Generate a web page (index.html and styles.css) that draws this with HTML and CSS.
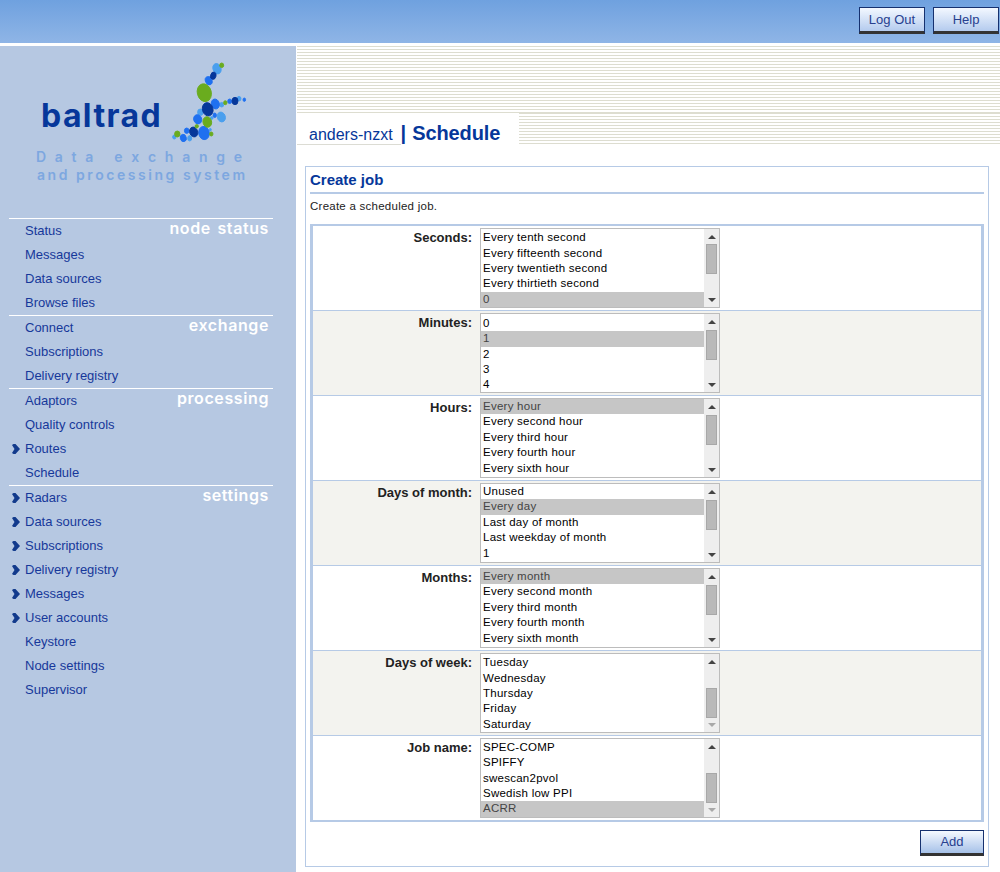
FILE: index.html
```html
<!DOCTYPE html>
<html lang="en">

<head>
  <meta charset="UTF-8" />
  <title>Schedule</title>
  <link rel="stylesheet" href="styles.css">
</head>

<body>

  <header class="topbar">
    <a class="btn">Log Out</a>
    <a class="btn">Help</a>
  </header>

  <div class="page">

    <aside class="sidebar">
      <div class="logo">
        <div class="logo-name">baltrad</div>
        <svg class="logo-mark" viewBox="0 0 100 95" width="100" height="95">
          <g fill="#4a9fee" stroke="#4a9fee" stroke-width="0.9">
            <ellipse cx="57" cy="13.700" rx="4" ry="5.300" transform="rotate(-20 57 13.700)" />
            <ellipse cx="61.700" cy="49.700" rx="2" ry="2.300" />
            <ellipse cx="79" cy="43.700" rx="2" ry="2.300" />
            <ellipse cx="40.300" cy="57.300" rx="2.700" ry="3.300" />
            <ellipse cx="61.300" cy="62" rx="4" ry="5" transform="rotate(-20 61.300 62)" />
            <ellipse cx="51.700" cy="63" rx="1.400" ry="1.400" />
            <ellipse cx="50.300" cy="74.700" rx="1" ry="1.300" />
            <ellipse cx="29.700" cy="83.300" rx="2" ry="2.700" />
            <ellipse cx="14.300" cy="82" rx="1.700" ry="2" />
          </g>
          <g fill="#1f70f0" stroke="#1f70f0" stroke-width="0.9">
            <ellipse cx="48.700" cy="25.700" rx="3.300" ry="4.300" transform="rotate(-20 48.700 25.700)" />
            <ellipse cx="55.300" cy="49" rx="4" ry="5" transform="rotate(-15 55.300 49)" />
            <ellipse cx="69.700" cy="46.300" rx="2" ry="2.300" />
            <ellipse cx="84.300" cy="44.700" rx="1.300" ry="1.700" />
            <ellipse cx="37.700" cy="64.300" rx="4" ry="4.700" transform="rotate(-20 37.700 64.300)" />
            <ellipse cx="54.700" cy="60.300" rx="1.700" ry="2.300" />
            <ellipse cx="44" cy="78" rx="5.300" ry="6.700" transform="rotate(-10 44 78)" />
            <ellipse cx="26.700" cy="75.700" rx="2.300" ry="2.700" />
            <ellipse cx="23.300" cy="83" rx="3" ry="3.700" transform="rotate(-15 23.300 83)" />
          </g>
          <g fill="#06379a" stroke="#06379a" stroke-width="0.9">
            <ellipse cx="53.300" cy="20.700" rx="2.700" ry="3.700" transform="rotate(15 53.300 20.700)" />
            <ellipse cx="47.700" cy="54.300" rx="5.300" ry="6.700" transform="rotate(-15 47.700 54.300)" />
            <ellipse cx="75" cy="46" rx="3" ry="3.700" />
            <ellipse cx="33.700" cy="77" rx="4" ry="5" transform="rotate(-20 33.700 77)" />
          </g>
          <g fill="#6aac1e" stroke="#6aac1e" stroke-width="0.9">
            <ellipse cx="61.700" cy="10.300" rx="2" ry="2.300" />
            <ellipse cx="44.300" cy="37.700" rx="7" ry="9" transform="rotate(-15 44.300 37.700)" />
            <ellipse cx="65.300" cy="47.700" rx="1.700" ry="2" />
            <ellipse cx="47.300" cy="67" rx="4.300" ry="5.300" transform="rotate(-15 47.300 67)" />
            <ellipse cx="36.700" cy="71.300" rx="1.700" ry="1.700" />
            <ellipse cx="51.300" cy="79" rx="1.700" ry="2" />
            <ellipse cx="17.300" cy="79" rx="2.700" ry="3" />
          </g>
        </svg>
        <div class="logo-tag">D a t a &nbsp; e x c h a n g e</div>
        <div class="logo-tag logo-tag-2">and processing system</div>
      </div>

      <nav class="menu">
        <div class="menu-group">
          <span class="menu-title">node status</span>
          <a class="menu-item">Status</a>
          <a class="menu-item">Messages</a>
          <a class="menu-item">Data sources</a>
          <a class="menu-item">Browse files</a>
        </div>
        <div class="menu-group">
          <span class="menu-title">exchange</span>
          <a class="menu-item">Connect</a>
          <a class="menu-item">Subscriptions</a>
          <a class="menu-item">Delivery registry</a>
        </div>
        <div class="menu-group">
          <span class="menu-title">processing</span>
          <a class="menu-item">Adaptors</a>
          <a class="menu-item">Quality controls</a>
          <a class="menu-item has-sub"><svg class="chev" viewBox="0 0 8 10"><path d="M0 1l1.500-1h2l4.500 5-4.500 5h-2l-1.500-1 2.500-4z" /></svg>Routes</a>
          <a class="menu-item">Schedule</a>
        </div>
        <div class="menu-group">
          <span class="menu-title">settings</span>
          <a class="menu-item has-sub"><svg class="chev" viewBox="0 0 8 10"><path d="M0 1l1.500-1h2l4.500 5-4.500 5h-2l-1.500-1 2.500-4z" /></svg>Radars</a>
          <a class="menu-item has-sub"><svg class="chev" viewBox="0 0 8 10"><path d="M0 1l1.500-1h2l4.500 5-4.500 5h-2l-1.500-1 2.500-4z" /></svg>Data sources</a>
          <a class="menu-item has-sub"><svg class="chev" viewBox="0 0 8 10"><path d="M0 1l1.500-1h2l4.500 5-4.500 5h-2l-1.500-1 2.500-4z" /></svg>Subscriptions</a>
          <a class="menu-item has-sub"><svg class="chev" viewBox="0 0 8 10"><path d="M0 1l1.500-1h2l4.500 5-4.500 5h-2l-1.500-1 2.500-4z" /></svg>Delivery registry</a>
          <a class="menu-item has-sub"><svg class="chev" viewBox="0 0 8 10"><path d="M0 1l1.500-1h2l4.500 5-4.500 5h-2l-1.500-1 2.500-4z" /></svg>Messages</a>
          <a class="menu-item has-sub"><svg class="chev" viewBox="0 0 8 10"><path d="M0 1l1.500-1h2l4.500 5-4.500 5h-2l-1.500-1 2.500-4z" /></svg>User accounts</a>
          <a class="menu-item">Keystore</a>
          <a class="menu-item">Node settings</a>
          <a class="menu-item">Supervisor</a>
        </div>
      </nav>
    </aside>

    <main class="content">
      <div class="stripes"></div>
      <div class="title-row">
        <div class="title">
          <span class="node-name">anders-nzxt</span>
          <span class="title-sep">|</span>
          <span class="page-name">Schedule</span>
        </div>
        <div class="stripes stripes-fill"></div>
      </div>

      <section class="panel">
        <h2 class="panel-title">Create job</h2>
        <p class="panel-text">Create a scheduled job.</p>

        <div class="job-table">

          <div class="job-row">
            <label class="job-label">Seconds:</label>
            <div class="listbox">
              <div class="options shift-1">
                <div>Every tenth second</div>
                <div>Every fifteenth second</div>
                <div>Every twentieth second</div>
                <div>Every thirtieth second</div>
                <div class="sel">0</div>
              </div>
              <div class="scroll"><i class="up"></i><b class="thumb thumb-mid"></b><i class="down"></i></div>
            </div>
          </div>

          <div class="job-row alt">
            <label class="job-label">Minutes:</label>
            <div class="listbox">
              <div class="options shift-2">
                <div>0</div>
                <div class="sel">1</div>
                <div>2</div>
                <div>3</div>
                <div>4</div>
              </div>
              <div class="scroll"><i class="up"></i><b class="thumb thumb-top"></b><i class="down"></i></div>
            </div>
          </div>

          <div class="job-row">
            <label class="job-label">Hours:</label>
            <div class="listbox">
              <div class="options">
                <div class="sel">Every hour</div>
                <div>Every second hour</div>
                <div>Every third hour</div>
                <div>Every fourth hour</div>
                <div>Every sixth hour</div>
              </div>
              <div class="scroll"><i class="up"></i><b class="thumb thumb-top"></b><i class="down"></i></div>
            </div>
          </div>

          <div class="job-row alt">
            <label class="job-label">Days of month:</label>
            <div class="listbox">
              <div class="options">
                <div>Unused</div>
                <div class="sel">Every day</div>
                <div>Last day of month</div>
                <div>Last weekday of month</div>
                <div>1</div>
              </div>
              <div class="scroll"><i class="up"></i><b class="thumb thumb-top"></b><i class="down"></i></div>
            </div>
          </div>

          <div class="job-row">
            <label class="job-label">Months:</label>
            <div class="listbox">
              <div class="options">
                <div class="sel">Every month</div>
                <div>Every second month</div>
                <div>Every third month</div>
                <div>Every fourth month</div>
                <div>Every sixth month</div>
              </div>
              <div class="scroll"><i class="up"></i><b class="thumb thumb-top"></b><i class="down"></i></div>
            </div>
          </div>

          <div class="job-row alt">
            <label class="job-label">Days of week:</label>
            <div class="listbox">
              <div class="options shift-1">
                <div>Tuesday</div>
                <div>Wednesday</div>
                <div>Thursday</div>
                <div>Friday</div>
                <div>Saturday</div>
              </div>
              <div class="scroll"><i class="up"></i><b class="thumb thumb-end"></b><i class="down off"></i></div>
            </div>
          </div>

          <div class="job-row last">
            <label class="job-label">Job name:</label>
            <div class="listbox">
              <div class="options shift-3">
                <div>SPEC-COMP</div>
                <div>SPIFFY</div>
                <div>swescan2pvol</div>
                <div>Swedish low PPI</div>
                <div class="sel">ACRR</div>
              </div>
              <div class="scroll"><i class="up"></i><b class="thumb thumb-end"></b><i class="down off"></i></div>
            </div>
          </div>

        </div>

        <div class="panel-foot">
          <a class="btn btn-add">Add</a>
        </div>
      </section>
    </main>

  </div>

</body>

</html>
```

FILE: styles.css
```css
html,
body {
  margin: 0;
  padding: 0;
}

body {
  width: 1000px;
  background: #fff;
  font-family: "Liberation Sans", Arial, sans-serif;
  font-size: 13px;
  color: #222;
}

.topbar {
  height: 43px;
  box-sizing: border-box;
  padding: 7px 1px 0 0;
  display: flex;
  justify-content: flex-end;
  align-items: flex-start;
  gap: 8px;
  background: linear-gradient(#6fa1df, #8fb5e6);
}

.btn {
  display: block;
  box-sizing: border-box;
  width: 66px;
  height: 27px;
  line-height: 24px;
  text-align: center;
  color: #27408f;
  border: 1px solid #16316f;
  border-bottom: 3px solid #333;
  background: linear-gradient(#f3f8ff, #b4cbee);
}

.page {
  display: flex;
  margin-top: 3px;
}

/* sidebar */

.sidebar {
  width: 296px;
  height: 826px;
  flex: none;
  background: #b6c8e2;
}

.logo {
  height: 172px;
  position: relative;
}

.logo-name {
  position: absolute;
  left: 41px;
  top: 46px;
  font-family: Inter, sans-serif;
  font-size: 32px;
  font-weight: 700;
  line-height: 48px;
  letter-spacing: 1.400px;
  color: #06379a;
}

.logo-mark {
  position: absolute;
  left: 160px;
  top: 9px;
}

.logo-tag {
  position: absolute;
  left: 36px;
  top: 102px;
  font-family: Inter, sans-serif;
  font-size: 14px;
  font-weight: 600;
  line-height: 18px;
  letter-spacing: 2.600px;
  white-space: nowrap;
  color: #7da7e0;
}

.logo-tag-2 {
  top: 120px;
  left: 37px;
  letter-spacing: 2.550px;
}

.menu-group {
  position: relative;
  margin: 0 23px 0 9px;
  border-top: 1px solid #fff;
}

.menu-title {
  position: absolute;
  right: 4px;
  top: -1px;
  font-family: Inter, sans-serif;
  font-size: 16px;
  font-weight: 600;
  line-height: 21px;
  letter-spacing: 0.600px;
  word-spacing: 2px;
  color: #fff;
}

.menu-item {
  display: flex;
  align-items: center;
  box-sizing: border-box;
  height: 24px;
  padding: 0 0 2px 16px;
  color: #16389a;
}

.menu-item.has-sub {
  padding-left: 3px;
}

.chev {
  width: 8px;
  height: 10px;
  margin: 2px 5px 0 0;
  fill: #123a8c;
}

/* main */

.content {
  flex: 1;
  min-width: 0;
  padding-left: 1px;
}

.stripes {
  height: 67px;
  background: repeating-linear-gradient(#ddddd0 0, #ddddd0 1px, #fff 1px, #fff 3px);
}

.title-row {
  display: flex;
  height: 32px;
}

.title {
  width: 222px;
  height: 32px;
  box-sizing: border-box;
  padding-left: 12px;
  display: flex;
  align-items: baseline;
  color: #06379a;
  background: linear-gradient(#dcdcd4, #dcdcd4) no-repeat 0 31px / 104px 1px #fff;
  line-height: 40px;
}

.node-name {
  font-size: 16px;
}

.title-sep {
  margin-left: 8px;
  font-size: 20px;
  font-weight: bold;
}

.page-name {
  margin-left: 6px;
  font-size: 20px;
  font-weight: bold;
  letter-spacing: -0.100px;
}

.stripes-fill {
  flex: 1;
  height: 32px;
}

.panel {
  margin: 21px 11px 0 8px;
  height: 701px;
  box-sizing: border-box;
  border: 1px solid #b6cae6;
  padding: 0 4px;
}

.panel-title {
  margin: 0;
  height: 25px;
  line-height: 26px;
  font-size: 15px;
  font-weight: bold;
  color: #06379a;
  border-bottom: 2px solid #b6cae6;
}

.panel-text {
  margin: 0;
  height: 30px;
  line-height: 24px;
  font-size: 11.500px;
  letter-spacing: 0.250px;
}

.job-table {
  border: 3px solid #b6cae6;
  border-top-width: 2px;
  border-bottom-width: 2px;
}

.job-row {
  display: flex;
  height: 82px;
  padding-top: 2px;
  border-bottom: 1px solid #b6cae6;
}

.job-row.alt {
  background: #f3f3ef;
}

.job-row.last {
  border-bottom: 0;
  height: 82px;
}

.job-label {
  width: 159px;
  margin-right: 8px;
  text-align: right;
  font-weight: bold;
  line-height: 19px;
}

.listbox {
  display: flex;
  width: 240px;
  height: 80px;
  box-sizing: border-box;
  border: 1px solid #bcbcbc;
  background: #fff;
  overflow: hidden;
}

.options {
  flex: 1;
  color: #000;
  font-size: 11.500px;
  letter-spacing: 0.250px;
}

.options div {
  height: 15.400px;
  line-height: 15px;
  padding-left: 2px;
}

.options .sel {
  background: #c6c6c6;
  color: #444;
}

.shift-1 {
  padding-top: 1.200px;
}

.shift-2 {
  padding-top: 1.800px;
}

.shift-3 {
  padding-top: 0.800px;
}

.scroll {
  width: 15px;
  background: #eeeeee;
  position: relative;
}

.scroll i {
  position: absolute;
  left: 4px;
  border-left: 4px solid transparent;
  border-right: 4px solid transparent;
}

.up {
  top: 6px;
  border-bottom: 4px solid #444;
}

.down {
  bottom: 5px;
  border-top: 4px solid #444;
}

.down.off {
  border-top-color: #a8a8a8;
}

.thumb {
  position: absolute;
  left: 2px;
  width: 9px;
  height: 28px;
  background: #b9b9b9;
  border: 1px solid #a8a8a8;
}

.thumb-top {
  top: 16px;
}

.thumb-mid {
  top: 15px;
}

.thumb-end {
  top: 34px;
}

.panel-foot {
  display: flex;
  justify-content: flex-end;
  padding-top: 8px;
}

.btn-add {
  width: 64px;
  height: 26px;
  line-height: 22px;
  background: linear-gradient(#f5f9ff, #a6c1e8);
}
```
